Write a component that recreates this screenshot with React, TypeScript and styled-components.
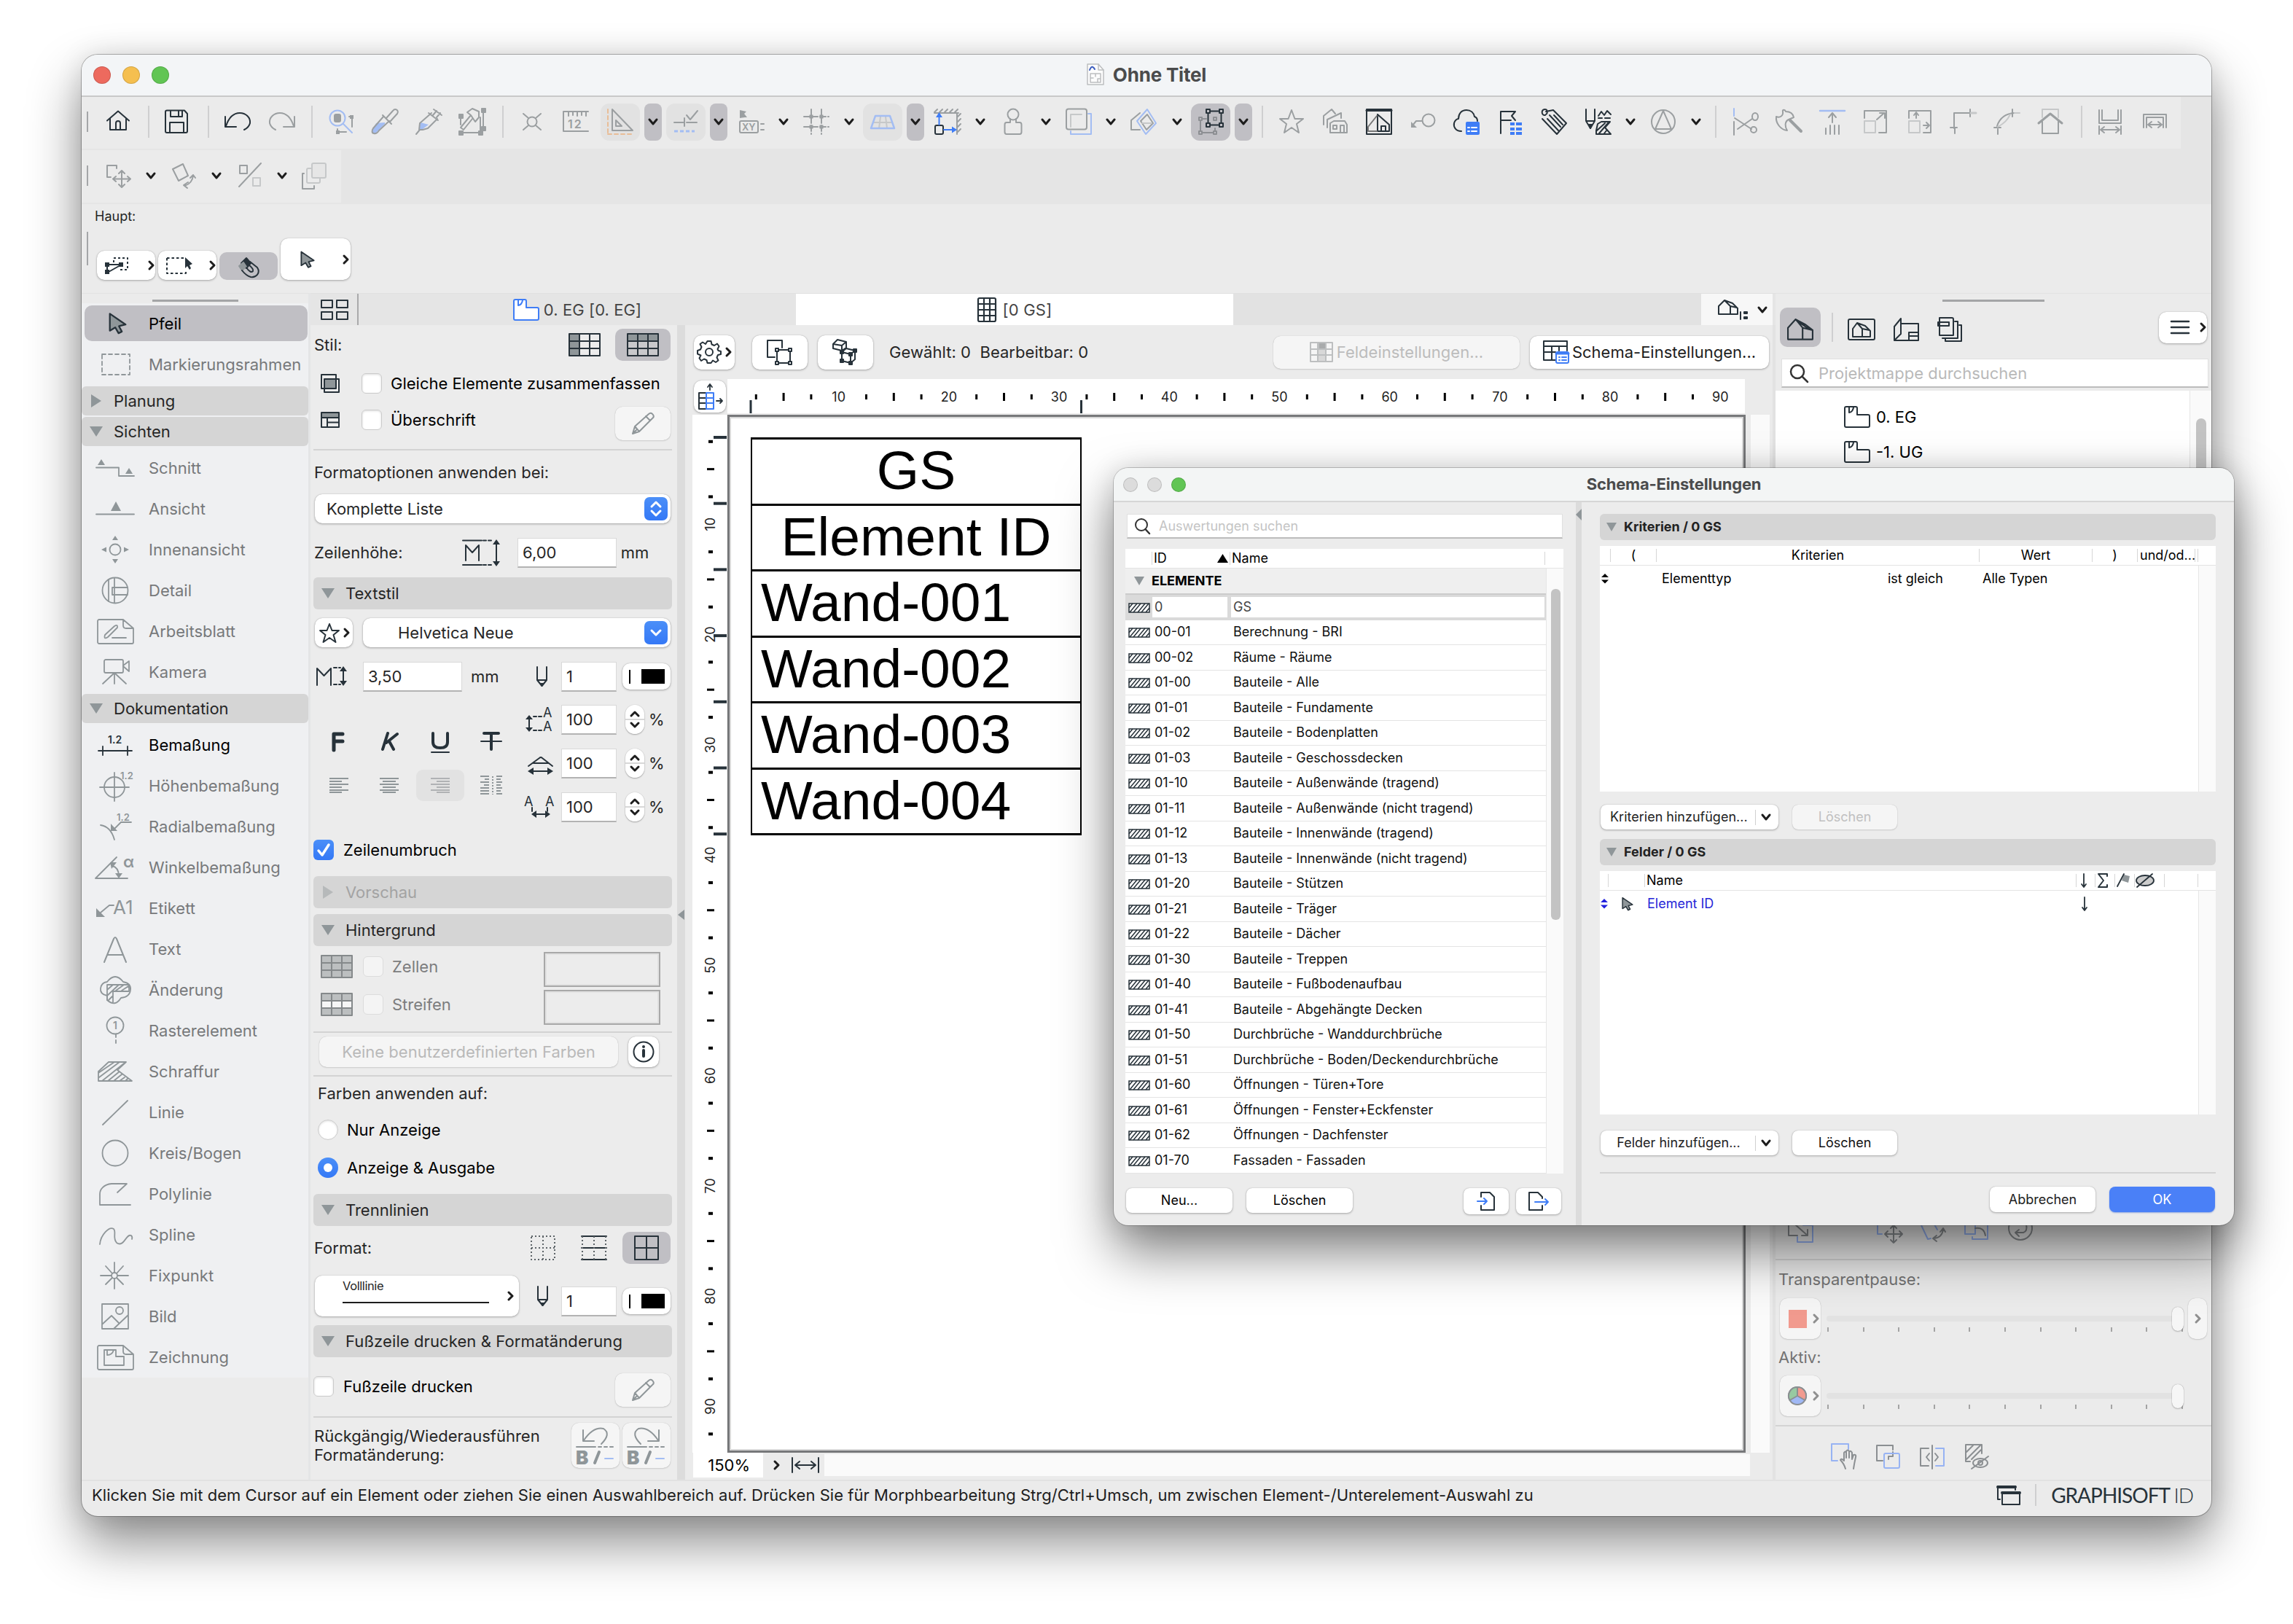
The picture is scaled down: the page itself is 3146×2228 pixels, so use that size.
import React from "react";
import styled, { createGlobalStyle, css } from "styled-components";

const DK = "#27323a";
const GR = "#9b9fa1";
const TG = "#8f9699";
const LG = "#c6c8c9";
const PB = "#a3bdf3";
const BB = "#3f7df6";
const OR = "#e9bd97";

const Global = createGlobalStyle`
  * { box-sizing: border-box; }
  html, body { margin: 0; padding: 0; background: #fff; }
  body { font-family: Inter, "Liberation Sans", sans-serif; font-size: 22px; color: #222; width: 3146px; height: 2228px; overflow: hidden; }
  svg { display: block; flex: none; overflow: visible; }
`;

/* ---------- shared parts ---------- */

const Txt = styled.span<{ $s?: number; $c?: string; $w?: number; $ls?: number; $ml?: number; $lh?: number }>`
  font-size: ${(p) => p.$s ?? 22}px;
  color: ${(p) => p.$c ?? "#262626"};
  font-weight: ${(p) => p.$w ?? 400};
  letter-spacing: ${(p) => p.$ls ?? 0}px;
  margin-left: ${(p) => p.$ml ?? 0}px;
  line-height: ${(p) => p.$lh ?? 28}px;
  white-space: pre;
  flex: none;
`;

const Desktop = styled.div`
  position: relative;
  width: 3146px;
  height: 2228px;
  padding: 75px 112px;
  background: #fff;
  overflow: hidden;
`;

const MainWindow = styled.main`
  width: 2922px;
  height: 2005px;
  border-radius: 22px;
  display: flex;
  flex-direction: column;
  background: #ebebeb;
  overflow: hidden;
  box-shadow: 0 0 0 1px rgba(0, 0, 0, 0.28), 0 36px 72px rgba(0, 0, 0, 0.46), 0 0 36px rgba(0, 0, 0, 0.1);
`;

const TitleBar = styled.header`
  height: 58px;
  flex: none;
  background: #f3f5f7;
  border-bottom: 2px solid #c9c9c9;
  display: grid;
  grid-template-columns: 1fr auto 1fr;
  align-items: center;
  padding: 0 16px;
`;

const Lights = styled.div<{ $gap: number }>`
  display: flex;
  gap: ${(p) => p.$gap}px;
`;

const Light = styled.i<{ $c: string; $d: number }>`
  width: ${(p) => p.$d}px;
  height: ${(p) => p.$d}px;
  border-radius: 50%;
  background: ${(p) => p.$c};
  box-shadow: inset 0 0 0 1px rgba(0, 0, 0, 0.14);
`;

const TitleText = styled.h1<{ $s: number }>`
  margin: 0 0 2px;
  display: flex;
  align-items: center;
  gap: 12px;
  font-size: ${(p) => p.$s}px;
  font-weight: 700;
  letter-spacing: -0.200px;
  color: #4a4b4c;
`;

const ToolStrip = styled.div<{ $h: number }>`
  height: ${(p) => p.$h}px;
  flex: none;
  display: flex;
  background: #e5e5e5;
`;

const Strip = styled.div<{ $w: number; $h: number }>`
  width: ${(p) => p.$w}px;
  height: ${(p) => p.$h}px;
  background: #ebebeb;
  display: flex;
  align-items: center;
  padding: 0 0 3px 7px;
`;

const Grip = styled.i<{ $h: number }>`
  width: 2px;
  height: ${(p) => p.$h}px;
  background: #a4a6a8;
  flex: none;
`;

const Slot = styled.div<{ $g: number; $w?: number }>`
  margin-left: ${(p) => p.$g}px;
  width: ${(p) => p.$w ?? 40}px;
  flex: none;
  display: flex;
  justify-content: center;
  align-items: center;
`;

const Sep = styled.i<{ $g: number; $h?: number }>`
  margin-left: ${(p) => p.$g}px;
  width: 2px;
  height: ${(p) => p.$h ?? 44}px;
  background: #cfcfd0;
  flex: none;
`;

const Toggle = styled.div<{ $g: number; $on?: boolean }>`
  margin-left: ${(p) => p.$g}px;
  width: 54px;
  height: 51px;
  border-radius: 12px;
  background: ${(p) => (p.$on ? "#c0bfc4" : "#e2e2e2")};
  display: flex;
  align-items: center;
  justify-content: center;
  flex: none;
`;

const Pill = styled.div`
  margin-left: 6px;
  width: 24px;
  height: 51px;
  border-radius: 8px;
  background: #c0bfc4;
  display: flex;
  align-items: center;
  justify-content: center;
  flex: none;
`;

const Push = styled.button<{ $w: number; $h: number; $g?: number; $mt?: number; $kind?: "off" | "on" | "primary"; $r?: number }>`
  appearance: none;
  border: 0;
  padding: 0;
  margin: ${(p) => p.$mt ?? 0}px 0 0 ${(p) => p.$g ?? 0}px;
  width: ${(p) => p.$w}px;
  height: ${(p) => p.$h}px;
  border-radius: ${(p) => p.$r ?? 10}px;
  display: flex;
  align-items: center;
  justify-content: center;
  flex: none;
  font: inherit;
  ${(p) =>
    p.$kind === "on"
      ? css`
          background: #c0bfc4;
        `
      : p.$kind === "primary"
        ? css`
            background: #4a80f7;
            box-shadow: 0 1px 2px rgba(30, 80, 200, 0.4);
          `
        : p.$kind === "off"
          ? css`
              background: #f5f5f5;
              box-shadow: 0 0 1px rgba(0, 0, 0, 0.25), 0 1px 2px rgba(0, 0, 0, 0.12);
            `
          : css`
              background: #fff;
              box-shadow: 0 0 1px rgba(0, 0, 0, 0.3), 0 1px 3px rgba(0, 0, 0, 0.28);
            `}
`;

type IcProps = { w?: number; h?: number; c?: string; sw?: number; children: React.ReactNode };
const Ic = ({ w = 40, h = 40, c = GR, sw = 2, children }: IcProps) => (
  <svg width={w} height={h} viewBox={`0 0 ${w} ${h}`} fill="none" stroke={c} strokeWidth={sw} strokeLinecap="round" strokeLinejoin="round">
    {children}
  </svg>
);

const Down = ({ c = "#1d1d1d" }: { c?: string }) => (
  <Ic w={14} h={10} c={c} sw={3}>
    <path d="M2 2l5 6 5-6" />
  </Ic>
);
const Right = ({ c = "#1d1d1d" }: { c?: string }) => (
  <Ic w={9} h={14} c={c} sw={3}>
    <path d="M2 2l5 5-5 5" />
  </Ic>
);
const Tri = ({ dir, c = "#8f9699" }: { dir: "down" | "right"; c?: string }) => (
  <svg width={18} height={14} viewBox="0 0 18 14" fill={c}>
    {dir === "down" && <path d="M0 0H18L9 14Z" />}
    {dir === "right" && <path d="M2 -2V16L16 7Z" />}
  </svg>
);

/* ---------- toolbar icons ---------- */

const icons: Record<string, React.ReactNode> = {
  home: <Ic c={DK}><path d="M5 18.500L20 5.500L35 18.500M9 15.500V31H31V15.500M17 31V22a3 3 0 0 1 6 0V31" /></Ic>,
  save: <Ic c={DK}><path d="M7 4.500H31L35 9V33a2 2 0 0 1-2 2H7a2 2 0 0 1-2-2V6.500a2 2 0 0 1 2-2ZM12 5V13H28V5M23 5V13M11 35V21H30V35" /></Ic>,
  undo: <Ic c={DK}><path d="M3 13V27H18M4 26C8 14 15 8 23 8C31 8 38 14 37 22C36 26 33 29 29 31" /></Ic>,
  redo: <Ic><path d="M37 13V27H22M36 26C32 14 25 8 17 8C9 8 2 14 3 22C4 26 7 29 11 31" /></Ic>,
  find: (
    <Ic>
      <circle cx="14" cy="15" r="10.500" stroke={PB} />
      <path d="M22 23L34 35" stroke={PB} />
      <rect x="10" y="10" width="8" height="10" rx="2" fill={GR} />
      <path d="M33 13H30M34 14V27M14 30V34H26" />
      <path d="M31 11h5v5h-5zM12 32h5v5h-5z" fill={GR} stroke="none" />
    </Ic>
  ),
  dropper: (
    <Ic>
      <path d="M8 22L3 31V36H7L20 23V21Z" fill={PB} stroke="none" />
      <path d="M18 13L4 29C2 32 2 36 5 36C8 37 10 35 12 32L26 19M17 11L29 23M22 15L31 5C34 1 40 4 37 9L27 20" />
    </Ic>
  ),
  syringe: (
    <Ic>
      <path d="M9 21L7 30H12L20 24Z" fill={PB} stroke="none" />
      <path d="M3 37L8 31M7 31L8 22L24 8M12 31L19 29L32 16M7 31H12M20 8L33 18M26 11L31 5M31 14L36 8M27 3L38 11" />
    </Ic>
  ),
  hammer: (
    <Ic>
      <path d="M2 10h5v5H2zM33 2h5v5h-5zM33 27h5v5h-5zM2 33h5v5H2zM29 33h5v5h-5z" fill={GR} />
      <path d="M4 15V24M7 35H29M35 7V27M31 33V14" />
      <path d="M13 7L20 2L29 6V14L24 20M18 11L4 28L8 31L20 16M13 7L18 11L24 20" />
    </Ic>
  ),
  xnode: <Ic><circle cx="20" cy="20" r="6.500" /><path d="M8 9L15 15M32 9L25 15M8 31L15 25M32 31L25 25" /></Ic>,
  ruler: (
    <Ic>
      <path d="M3 33H37M3 33V6H37M10 6V12M16 6V11M22 6V12M28 6V11M34 6V12" />
      <text x="9" y="29" fontSize="16" fill={GR} stroke="none" fontWeight="600" letterSpacing="2">12</text>
    </Ic>
  ),
  triangle: <Ic><path d="M9 3V32H37ZM14 18V26H22Z" /><path d="M3 3V36M3 37H38" stroke={OR} strokeDasharray="5 4" /></Ic>,
  check: <Ic><path d="M4 21H17M21 21H35M18 15V26M21 11L26 17L36 5" /><path d="M4 33H32" stroke={PB} strokeWidth="3" strokeDasharray="5 3" strokeLinecap="butt" /></Ic>,
  xy: (
    <Ic>
      <path d="M4 4L13 6L10 9L14 14H11L4 15Z" fill={GR} stroke="none" />
      <rect x="4" y="19" width="25" height="16" rx="2" />
      <text x="7" y="32" fontSize="13" fill={GR} stroke="none" fontWeight="600">XY</text>
      <path d="M33 23H37M33 31H37" />
    </Ic>
  ),
  grid: (
    <Ic>
      <path d="M13 3V37M27 3V37M3 13H37M3 27H37" strokeDasharray="8 3" />
      <path d="M10.500 10.500h5v5h-5zM24.500 10.500h5v5h-5zM10.500 24.500h5v5h-5zM24.500 24.500h5v5h-5z" fill={GR} stroke="none" />
    </Ic>
  ),
  persp: <Ic><path d="M17 13L15 29M24 13L26 29M7 21H33" stroke={LG} /><path d="M10 12H30L36 29H4Z" stroke={PB} strokeWidth="2.500" /></Ic>,
  guides: (
    <Ic>
      <path d="M2 8H35M33 8V37M2 7L6 3M9 7L13 3M16 7L20 3M23 7L27 3M30 7L34 3M34 13L38 9M34 20L38 16M34 27L38 23M34 34L38 30" />
      <rect x="3" y="25" width="11" height="12" rx="2" stroke={DK} />
      <path d="M8.500 24V13M15 31H28" stroke={BB} />
      <path d="M8.500 7L13 14H4ZM33 31L26 26.500V35.500Z" fill={BB} stroke="none" />
    </Ic>
  ),
  person: <Ic><circle cx="20" cy="10" r="7.500" fill="#ebebeb" /><path d="M16 16V21H11C9 21 8.500 22 8.500 24V34C8.500 36 9 37 11 37H29C31 37 31.500 36 31.500 34V24C31.500 22 31 21 29 21H24V16" /></Ic>,
  layers: <Ic><path d="M33 9H37V37H9V33" stroke={PB} /><path d="M9 27V10H24" stroke={LG} /><rect x="3" y="2.500" width="28" height="28" rx="3" /></Ic>,
  rhomb: <Ic><path d="M3 31V18L15 8M3 31H15" /><path d="M25 3L11 19L23 37L37 22Z" stroke={PB} /><path d="M25 10L16 19L24 31L33 22Z" /><path d="M18 22H31" stroke={LG} /></Ic>,
  group: (
    <Ic c={DK}>
      <g stroke="#8d8f93"><path d="M4 14h4v4H4zM4 33h4v4H4zM24 33h4v4h-4zM24 14h4v4h-4zM6 18V33M8 35H24M26 29V33M8 16H14" /></g>
      <path d="M14 3h5v5h-5zM32 3h5v5h-5zM14 22h5v5h-5zM32 22h5v5h-5zM19 5.500H32M19 24.500H32M16.500 8V22M34.500 8V22" />
    </Ic>
  ),
  star: <Ic><path d="M20 4L24.500 16H36L27 23L30 35L20 28L10 35L13 23L4 16H15.500Z" /></Ic>,
  houses: <Ic><path d="M4 24V12L15 3L20 9M9 28V17L28 8V15M13 35V22L18 19H33L36 24V35ZM17 25h5v5h-5zM27 35V25h5V35" /></Ic>,
  housebox: <Ic c={DK}><rect x="3" y="3" width="34" height="34" /><path d="M3 4.500H37" strokeWidth="3" /><path d="M18 10V33H34V24Z" /><path d="M17 12L5 27V33H17" stroke="#777" /><path d="M23 33V26H29V33" /></Ic>,
  key: <Ic><circle cx="27" cy="18" r="8.500" /><path d="M18 19H10L5 25" /><path d="M3 20V28H11Z" fill={GR} stroke="none" /></Ic>,
  cloud: (
    <Ic c={DK}>
      <path d="M13 33C5 33 2 27 3 22C4 18 7 16 9 16C9 9 13 4 20 4C26 4 30 8 31 13C34 14 35 17 35 19" />
      <rect x="19" y="20" width="19" height="18" rx="2" fill={BB} stroke="none" />
      <path d="M22 28H24M27 28H34M22 33H24M27 33H34" stroke="#fff" />
    </Ic>
  ),
  flag: (
    <Ic c={DK}>
      <path d="M6 36V6H26L21 12L26 18M6 18H20" />
      <path d="M19 21h6v4h-6zM19 28h6v4h-6zM19 34h6v4h-6zM27 21h8v4h-8zM27 28h8v4h-8zM27 34h8v4h-8z" fill={BB} stroke="none" />
    </Ic>
  ),
  tag: <Ic c={DK}><path d="M9 6L19 4L37 22L24 37L4 16M8 11C3 12 2 4 7 3C11 2 12 8 9 10M14 11L29 27M11 16L26 32M20 11L32 24" /></Ic>,
  pencil: (
    <Ic c={DK}>
      <path d="M4 3V19L10 29L16 19V3M4 19H16" /><path d="M8 24h4l-2 5z" fill={DK} />
      <path d="M21 12L25 6L29 11L33 5L38 10M21 15H26M30 15H37M20 23L25 20H37L30 28L38 37H18V32ZM19 32L30 22M22 36L34 22M29 36L33 31" />
    </Ic>
  ),
  tricircle: <Ic><circle cx="20" cy="20" r="16" /><path d="M20 5L9 30H31Z" /></Ic>,
  scissors: (
    <Ic><path d="M4 2V12" stroke={PB} /><path d="M4 20V38M5 15L28 30M9 30L29 16" /><ellipse cx="33" cy="13" rx="4" ry="5" /><ellipse cx="31" cy="31" rx="4" ry="4" /></Ic>
  ),
  axe: <Ic><path d="M12 6C11 3 15 3 16 6C22 6 26 9 27 14L20 17C14 20 15 27 18 32C9 31 2 22 3 13C8 15 13 12 12 6Z" /><path d="M22 18L37 33" strokeWidth="4" /></Ic>,
  uparrow: <Ic><path d="M3 5H37" stroke={PB} strokeWidth="2.500" /><path d="M20 9V21M15 14L20 8L25 14M11 29V37M17 25V37M23 25V37M29 25V37" /></Ic>,
  scale1: <Ic><path d="M5 15V5H35V35H25M22 17L32 8M26 8H33V15" /><path d="M5 19H20V35H5Z" stroke={LG} /></Ic>,
  scale2: <Ic><path d="M5 15V5H35V35H25M15 15V8M12 11L15 7L18 11M25 25H33M29 21L33 25L29 29" /><path d="M5 19H20V35H5Z" stroke={LG} /></Ic>,
  corner: <Ic><path d="M8 36V28M2 28H11" /><path d="M7 29V8H28M29 3V13" /><path d="M30 8H37" stroke={LG} strokeWidth="3" /></Ic>,
  curve: <Ic><path d="M7 37V30M2 28H11M6 26C9 16 17 9 30 8M27 3V13" /><path d="M7 27C16 22 20 18 24 10M30 8H37" stroke={LG} /></Ic>,
  roof: <Ic><path d="M9 14V3H31V14" stroke={LG} /><path d="M4 22L20 9L36 22" strokeWidth="3" /><path d="M9 19V36H31V19" /></Ic>,
  dim1: <Ic><path d="M5 4V22H35V4M9 4V18H31V4M5 26V37M35 26V37M7 31H33M12 27L7 31L12 35M28 27L33 31L28 35" /></Ic>,
  dim2: <Ic><path d="M5 28V10H36V28M9 28V14H32V28M11 24H30M16 20L11 24L16 28M25 20L30 24L25 28" /></Ic>,
  move: <Ic><path d="M17 10V6H4V22H9" /><path d="M24 13V36M12 24.500H36M20 17L24 13L28 17M20 32L24 36L28 32M16 21L12 24.500L16 28M32 21L36 24.500L32 28" /></Ic>,
  rotate: <Ic><path d="M5 11L19 4L26 20L13 27Z" /><path d="M21 34C28 32 32 28 33 20M29 23L33 19L36 23M26 29L20 33L25 37" /></Ic>,
  percent: <Ic><path d="M7 6H17V17H7ZM36 3L6 35" /><path d="M25 23H35V34H25Z" stroke={LG} /></Ic>,
  stack: <Ic><path d="M6 17H4V38H20V34" /><rect x="10" y="10" width="18" height="20" rx="2" stroke={LG} /><rect x="17" y="3" width="19" height="20" rx="2" stroke={LG} fill="#e6e6e6" /></Ic>,
};

type Tool = [kind: "i" | "b" | "B" | "p" | "c" | "s", gap: number, name?: string];
const tools1: Tool[] = [
  ["i", 21, "home"], ["s", 21], ["i", 17, "save"], ["s", 23], ["i", 19, "undo"], ["i", 21, "redo"], ["s", 20],
  ["i", 20, "find"], ["i", 19, "dropper"], ["i", 20, "syringe"], ["i", 20, "hammer"], ["s", 21], ["i", 19, "xnode"],
  ["i", 20, "ruler"], ["b", 14, "triangle"], ["p", 6], ["b", 6, "check"], ["p", 6], ["i", 13, "xy"], ["c", 12],
  ["i", 13, "grid"], ["c", 13], ["b", 7, "persp"], ["p", 6], ["i", 12, "guides"], ["c", 13], ["i", 13, "person"],
  ["c", 13], ["i", 13, "layers"], ["c", 12], ["i", 13, "rhomb"], ["c", 14], ["B", 7, "group"], ["p", 6], ["s", 13],
  ["i", 19, "star"], ["i", 20, "houses"], ["i", 20, "housebox"], ["i", 21, "key"], ["i", 19, "cloud"], ["i", 21, "flag"],
  ["i", 19, "tag"], ["i", 20, "pencil"], ["c", 13], ["i", 13, "tricircle"], ["c", 13], ["s", 14], ["i", 20, "scissors"],
  ["i", 19, "axe"], ["i", 20, "uparrow"], ["i", 19, "scale1"], ["i", 21, "scale2"], ["i", 20, "corner"], ["i", 20, "curve"],
  ["i", 19, "roof"], ["s", 22], ["i", 18, "dim1"], ["i", 21, "dim2"],
];
const tools2: Tool[] = [["i", 22, "move"], ["c", 12], ["i", 13, "rotate"], ["c", 13], ["i", 13, "percent"], ["c", 13], ["i", 12, "stack"]];

const Tools = ({ items }: { items: Tool[] }) => (
  <>
    {items.map(([k, g, n], i) =>
      k === "i" ? <Slot key={i} $g={g}>{icons[n!]}</Slot>
        : k === "s" ? <Sep key={i} $g={g} />
          : k === "c" ? <Slot key={i} $g={g} $w={24}><Down /></Slot>
            : k === "p" ? <Pill key={i}><Down /></Pill>
              : <Toggle key={i} $g={g} $on={k === "B"}>{icons[n!]}</Toggle>
    )}
  </>
);

/* ---------- main tool selector ---------- */

const HauptBar = styled.section`
  height: 122px;
  flex: none;
  padding: 5px 0 16px 8px;
  display: flex;
  flex-direction: column;
`;
const HauptRow = styled.div`
  display: flex;
  align-items: flex-end;
  margin-top: 18px;
  height: 57px;
`;
const HauptGrip = styled(Grip)`
  margin: 0 10px 20px -1px;
`;

const Arrow = ({ w, h }: { w: number; h: number }) => (
  <svg width={w} height={h} viewBox="0 0 22 26" fill={TG} stroke={DK} strokeWidth={2} strokeLinejoin="round">
    <path d="M1.500 1.500V22L8 18L12 25L16 23L12.500 16.500L20.500 14.500Z" />
  </svg>
);

const Haupt = () => (
  <HauptBar>
    <Txt $s={18} $ml={10} $lh={24}>Haupt:</Txt>
    <HauptRow>
      <HauptGrip $h={46} />
      <Push $w={80} $h={40} $g={2}>
        <Slot $g={8} $w={34}>
          <Ic w={34} h={26} c={DK}>
            <path d="M13 9V3H32V19H22" strokeDasharray="3 3" strokeLinecap="butt" />
            <path d="M4 12H22M4 12V23M6 22L22 13" />
            <path d="M1 9h6v6H1zM20 9h6v6h-6zM1 19h6v6H1z" fill={DK} stroke="none" />
          </Ic>
        </Slot>
        <Slot $g={26} $w={9}><Right /></Slot>
      </Push>
      <Push $w={80} $h={40} $g={4}>
        <Slot $g={8} $w={38}>
          <Ic w={38} h={28} c={DK}>
            <path d="M2 4H28M2 4V25H28V20" strokeDasharray="3.500 3" strokeLinecap="butt" />
            <path d="M27 3V18L30 15L33 20L35 18L33 14L37 12Z" fill={DK} stroke="none" />
          </Ic>
        </Slot>
        <Slot $g={22} $w={9}><Right /></Slot>
      </Push>
      <Push $w={80} $h={38} $g={4} $kind="on">
        <Ic w={34} h={34} c={DK}>
          <path d="M14 6L20 13L14 20L7 13Z" fill={DK} />
          <path d="M4 17L10 12L14 18L8 23Z" fill={TG} stroke={TG} />
          <path d="M19 11L29 19C34 27 27 33 20 32C16 31 12 28 8 23M14 19C18 25 21 26 23 24C24 22 22 19 17 15" />
        </Ic>
      </Push>
      <Push $w={96} $h={57} $g={4}>
        <Slot $g={24} $w={20}><Arrow w={20} h={28} /></Slot>
        <Slot $g={38} $w={9}><Right /></Slot>
      </Push>
    </HauptRow>
  </HauptBar>
);

/* ---------- tool box ---------- */

const Body = styled.div`
  height: 1628px;
  flex: none;
  display: grid;
  grid-template-columns: 314px 2010px 598px;
`;
const ToolBox = styled.nav`
  background: #ebebeb;
  border-right: 3px solid #e4e5e6;
  border-top: 1px solid #e2e2e2;
`;
const Handle = styled.div<{ $w: number; $h: number; $x: number }>`
  height: ${(p) => p.$h}px;
  padding: 8px 0 0 ${(p) => p.$x}px;
  flex: none;
  &::before {
    content: "";
    display: block;
    width: ${(p) => p.$w}px;
    height: 3px;
    background: #a4a5a7;
  }
`;
const ToolList = styled.div`
  background: #eff0f2;
  height: 1474px;
`;
const ToolRow = styled.div<{ $on?: boolean }>`
  height: 56px;
  padding: 3px 1px 4px 4px;
  & > div {
    height: 49px;
    border-radius: 10px;
    display: flex;
    align-items: center;
    padding-left: 14px;
    ${(p) => p.$on && "background: #c0bfc4;"}
  }
`;
const Group = styled.div`
  height: 40px;
  margin: 2px 0;
  background: #d5d5d5;
  border-radius: 6px;
  display: flex;
  align-items: center;
  padding-left: 11px;
`;

const ti = (children: React.ReactNode, c = TG) => <Ic w={56} h={44} c={c} sw={1.800}>{children}</Ic>;
const sm = (x: number, y: number, t: string, c = TG, s = 14) => (
  <text x={x} y={y} fontSize={s} fontWeight="600" fill={c} stroke="none">{t}</text>
);

const toolGroups: { head?: string; open?: boolean; rows: [string, React.ReactNode, string?][] }[] = [
  {
    rows: [
      ["Pfeil", <Slot $g={6} $w={50}><Arrow w={25} h={35} /></Slot>, "on"],
      ["Markierungsrahmen", ti(<path d="M10 8H48V36H10Z" strokeDasharray="5 4" />)],
    ],
  },
  { head: "Planung", rows: [] },
  {
    head: "Sichten",
    open: true,
    rows: [
      ["Schnitt", ti(<><path d="M2 21.500H33V33H54" /><path d="M4 18L9 10L14 18ZM42 30L47 22L52 30Z" fill={TG} stroke="none" /></>)],
      ["Ansicht", ti(<><path d="M2 29.500H54" /><path d="M22 25L29 12L36 25Z" fill={TG} stroke="none" /></>)],
      ["Innenansicht", ti(<><circle cx="28" cy="22" r="7.500" /><path d="M24 9L28 3L32 9ZM24 35L28 41L32 35ZM16 18.500L9 22L16 25.500ZM40 18.500L47 22L40 25.500Z" fill={TG} stroke="none" /></>)],
      ["Detail", ti(<><circle cx="28" cy="22" r="17.500" /><path d="M19 7V37M27 5V39M45 18H24V28H45" /></>)],
      ["Arbeitsblatt", ti(<><path d="M6 6H39L53 18V37a2 2 0 0 1-2 2H6a2 2 0 0 1-2-2V8a2 2 0 0 1 2-2ZM39 6V14Q39 18 43 18H53M14 27L27 15Q32 12 31 17L18 30Q12 34 14 27ZM24 31H43" /></>)],
      ["Kamera", ti(<><rect x="13" y="5" width="26" height="18" rx="2" /><path d="M39 13L47 7V21L39 14M27 23V38M26 24L11 38M28 24L43 38" /></>)],
    ],
  },
  {
    head: "Dokumentation",
    open: true,
    rows: [
      ["Bemaßung", ti(<><path d="M5 30H51M11 24V36M45 24V36" />{sm(18, 20, "1.2", DK)}</>, DK), "dark"],
      ["Höhenbemaßung", ti(<><circle cx="27" cy="24" r="14" /><path d="M7 24H47M27 4V43" />{sm(35, 13, "1.2", TG, 13)}</>)],
      ["Radialbemaßung", ti(<><path d="M8 20Q22 22 27 40M26 26L36 16H50" /><path d="M22 18V28H31Z" fill={TG} stroke="none" />{sm(30, 14, "1.2", TG, 13)}</>)],
      ["Winkelbemaßung", ti(<><path d="M30 8L1 37H45M24 20Q33 22 33 34" /><path d="M21 15H30L23 24ZM28 30H38L33 37Z" fill={TG} stroke="none" />{sm(39, 22, "α", TG, 22)}</>)],
      ["Etikett", ti(<><path d="M8 28L20 18H26" /><path d="M2 22V34H14Z" fill={TG} stroke="none" /><text x="25" y="30" fontSize="26" fill={TG} stroke="none">A1</text></>)],
      ["Text", ti(<path d="M13 40L26 8Q28 4 30 8L43 40M17 30H39" strokeWidth="2" />)],
      ["Änderung", ti(<><path d="M17 11Q28 -3 39 11Q50 13 49 22Q48 32 36 33Q28 46 17 36V30Q7 28 8 20Q9 12 17 11Z" /><path d="M17 15H47V24H25V39M17 15V36M17 22L25 15M17 30L33 15M19 36L25 30M29 23L40 15M37 23L46 17" /></>)],
      ["Rasterelement", ti(<><circle cx="28" cy="15" r="11.500" /><path d="M29 27V43" strokeDasharray="4 4" />{sm(25, 20, "1")}</>)],
      ["Schraffur", ti(<path d="M19 9H43L31 20L51 35H5V22ZM6 30L34 9M5 24L27 9M10 35L40 11M18 35L34 22M26 35L37 26M34 35L41 30M42 35L45 32" />)],
      ["Linie", ti(<path d="M11 39L45 6" />)],
      ["Kreis/Bogen", ti(<circle cx="28" cy="22" r="17.500" />)],
      ["Polylinie", ti(<path d="M31 20L44 8H23C12 9 7 16 7 22V37H49" />)],
      ["Spline", ti(<path d="M7 35C8 22 20 10 26 14C30 19 24 26 30 33C40 40 43 20 50 23Q52 25 51 28" />)],
      ["Fixpunkt", ti(<><circle cx="27" cy="22" r="4" /><path d="M27 4V18M27 26V40M8 22H23M31 22H46M15 9L24 19M39 9L30 19M15 34L24 25M39 34L30 25" /></>)],
      ["Bild", ti(<><path d="M10 5H46V39H10ZM10 33L23 21L33 31M26 39L46 20" /><circle cx="34" cy="14" r="5" /></>)],
      ["Zeichnung", ti(<><path d="M6 6H39L53 18V37a2 2 0 0 1-2 2H6a2 2 0 0 1-2-2V8a2 2 0 0 1 2-2ZM39 6V14Q39 18 43 18H53" /><path d="M14 12H29V21H40V33H13V12M17 12V19Q24 19 26 12" /></>)],
    ],
  },
];

const ToolPalette = () => (
  <ToolBox>
    <Handle $w={118} $h={13} $x={97} />
    <ToolList>
      {toolGroups.map((g, i) => (
        <React.Fragment key={i}>
          {g.head && (
            <Group>
              <Tri dir={g.open ? "down" : "right"} />
              <Txt $ml={15}>{g.head}</Txt>
            </Group>
          )}
          {g.rows.map(([t, ic, st]) => (
            <ToolRow key={t} $on={st === "on"}>
              <div>
                {ic}
                <Txt $ml={18} $c={st ? "#000" : "#77797b"}>{t}</Txt>
              </div>
            </ToolRow>
          ))}
        </React.Fragment>
      ))}
    </ToolList>
  </ToolBox>
);

/* ---------- settings palette ---------- */

const Center = styled.div`
  display: flex;
  flex-direction: column;
`;
const CenterBody = styled.div`
  flex: 1;
  display: grid;
  grid-template-columns: 503px 11px 1496px;
  min-height: 0;
`;
const Palette = styled.aside`
  background: #ececec;
  padding: 0 7px 0 4px;
  display: flex;
  flex-direction: column;
`;
const Row = styled.div<{ $h: number; $pt?: number; $pb?: number; $mt?: number }>`
  height: ${(p) => p.$h}px;
  flex: none;
  display: flex;
  align-items: center;
  padding: ${(p) => p.$pt ?? 0}px 2px ${(p) => p.$pb ?? 0}px 1px;
  margin-top: ${(p) => p.$mt ?? 0}px;
`;
const Fill = styled.span`
  flex: 1;
`;
const Rule = styled.hr<{ $mt?: number }>`
  border: 0;
  margin: ${(p) => p.$mt ?? 0}px 0 0;
  height: 2px;
  flex: none;
  width: 100%;
  background: #d3d3d3;
`;
const Head = styled.div<{ $mt?: number; $h?: number }>`
  height: ${(p) => p.$h ?? 44}px;
  margin-top: ${(p) => p.$mt ?? 0}px;
  flex: none;
  border-radius: 6px;
  background: #d5d5d5;
  display: flex;
  align-items: center;
  padding-left: 11px;
`;
const Check = styled.i<{ $g?: number; $on?: boolean; $off?: boolean; $round?: boolean }>`
  width: 28px;
  height: 28px;
  flex: none;
  margin-left: ${(p) => p.$g ?? 0}px;
  border-radius: ${(p) => (p.$round ? 14 : 6)}px;
  display: flex;
  align-items: center;
  justify-content: center;
  ${(p) =>
    p.$on
      ? "background: linear-gradient(#4b8ff8, #3478f6);"
      : p.$off
        ? "background: #f4f4f4; border: 1px solid #dcdcdc;"
        : "background: #fff; border: 1px solid #cbcbcb; box-shadow: inset 0 1px 3px rgba(0,0,0,.14);"}
`;
const Dot = styled.i`
  width: 12px;
  height: 12px;
  border-radius: 6px;
  background: #fff;
`;
const Select = styled.div<{ $g?: number; $pl: number; $w: number }>`
  margin-left: ${(p) => p.$g ?? 0}px;
  width: ${(p) => p.$w}px;
  height: 40px;
  border-radius: 10px;
  background: #fff;
  box-shadow: 0 0 1px rgba(0, 0, 0, 0.3), 0 1px 3px rgba(0, 0, 0, 0.3);
  display: flex;
  align-items: center;
  justify-content: space-between;
  padding: 0 4px 0 ${(p) => p.$pl}px;
`;
const Blue = styled.i`
  width: 32px;
  height: 32px;
  border-radius: 7px;
  background: linear-gradient(#4b8ff8, #3478f6);
  display: flex;
  align-items: center;
  justify-content: center;
`;
const Field = styled.div<{ $w: number; $g: number; $mt?: number }>`
  width: ${(p) => p.$w}px;
  height: 41px;
  margin: ${(p) => p.$mt ?? 0}px 0 0 ${(p) => p.$g}px;
  background: #fff;
  border: 1px solid #d9d9d9;
  border-bottom: 2px solid #b3b3b3;
  display: flex;
  align-items: center;
  padding-left: 6px;
  flex: none;
`;
const StyleGrid = styled.div`
  height: 180px;
  flex: none;
  display: grid;
  grid-template-columns: 290px 1fr;
`;
const LeftStyles = styled.div`
  padding: 30px 0 0 0;
  display: grid;
  grid-template-columns: 69px 70px 70px 70px;
  grid-auto-rows: 60px;
  place-items: center;
`;
const Metric = styled.div`
  height: 60px;
  display: flex;
  align-items: center;
`;
const Stepper = styled.div`
  margin-left: 12px;
  width: 26px;
  height: 40px;
  border-radius: 13px;
  background: linear-gradient(#fff 0 48%, #d8d8d8 48% 52%, #fff 52%);
  box-shadow: 0 0 1px rgba(0, 0, 0, 0.3), 0 1px 2px rgba(0, 0, 0, 0.3);
  display: flex;
  align-items: center;
  justify-content: center;
`;
const Swatch = styled.i`
  width: 32px;
  height: 20px;
  background: #000;
`;
const Bar = styled.i`
  width: 2px;
  height: 19px;
  background: #000;
`;
const EmptyBox = styled.i`
  width: 160px;
  height: 48px;
  margin: 8px 14px 0 0;
  border: 2px solid #a8a8a8;
  box-shadow: inset 0 0 0 2px #e2e2e2;
`;
const AlignBtn = styled.div<{ $on?: boolean }>`
  width: 66px;
  height: 43px;
  border-radius: 9px;
  display: flex;
  align-items: center;
  justify-content: center;
  ${(p) => p.$on && "background: #e2e2e2;"}
`;
const LineBtn = styled(Push)`
  justify-content: flex-start;
`;
const LineSample = styled.div`
  display: flex;
  flex-direction: column;
  gap: 11px;
  height: 50px;
  margin-left: 38px;
  width: 201px;
  text-align: left;
  &::after {
    content: "";
    height: 2px;
    background: #1d1d1d;
  }
`;

const TableIcon = ({ fills, c = DK, bg = "none" }: { fills: string; c?: string; bg?: string }) => (
  <Ic w={44} h={32} c={c}>
    <path d="M1 1H43V31H1Z" fill={bg} stroke="none" />
    <path d={fills} fill={c === DK ? TG : "#bcbfc0"} stroke="none" />
    <path d="M1 1H43V31H1ZM15 1V31M29 1V31M1 11H43M1 21H43" />
  </Ic>
);
const PencilIcon = () => (
  <Ic w={32} h={32} c={TG}>
    <path d="M2 30L5 20L24 3Q27 0 30 4Q32 7 29 9L11 27ZM5 20L11 27M20 6L26 12M7 25L2 30" />
  </Ic>
);
const PenIcon = () => (
  <Ic w={17} h={30} c={DK}>
    <path d="M2 2V20L8.500 28L15 20V2M3 20H14" />
    <path d="M6.500 25H10.500L8.500 28Z" fill={DK} />
  </Ic>
);
const PenBtn = ({ mt }: { mt?: number }) => (
  <Push $w={66} $h={36} $g={8} $mt={mt}>
    <Bar />
    <Slot $g={15} $w={32}><Swatch /></Slot>
  </Push>
);
const alignPaths = ["M1 2H27M1 6H18M1 10H27M1 14H18M1 18H27M1 21H18", "M1 2H27M5 6H23M1 10H27M5 14H23M1 18H27M5 21H23", "M1 2H27M9 6H27M1 10H27M9 14H27M1 18H27M9 21H27"];

const Settings = () => (
  <Palette>
    <Row $h={54}>
      <Txt>Stil:</Txt>
      <Fill />
      <TableIcon fills="M1 1H15V31H1Z" />
      <Push $w={76} $h={44} $g={20} $kind="on">
        <TableIcon fills="M1 1H43V11H1Z" bg="#c8c8cb" />
      </Push>
    </Row>
    <Row $h={52}>
      <Slot $g={9} $w={26}>
        <Ic w={26} h={26} c={DK}><path d="M5 7H22V20H5Z" fill={TG} stroke="none" /><path d="M1 1H21V20H1ZM5 7H25V25H5Z" /></Ic>
      </Slot>
      <Check $g={30} />
      <Txt $ml={12} $c="#000">Gleiche Elemente zusammenfassen</Txt>
    </Row>
    <Row $h={48}>
      <Slot $g={9} $w={26}>
        <Ic w={26} h={24} c={DK}><path d="M1 2H25V9H1Z" fill={TG} stroke="none" /><path d="M1 2H25V22H1ZM1 9H25M9 9V22M9 15.500H25" /></Ic>
      </Slot>
      <Check $g={30} />
      <Txt $ml={12} $c="#000">Überschrift</Txt>
      <Fill />
      <Push $w={76} $h={46} $mt={10} $kind="off"><PencilIcon /></Push>
    </Row>
    <Rule $mt={16} />
    <Row $h={60}><Txt>Formatoptionen anwenden bei:</Txt></Row>
    <Row $h={40}>
      <Select $g={1} $w={488} $pl={16}>
        <Txt>Komplette Liste</Txt>
        <Blue><Ic w={16} h={22} c="#fff" sw={3}><path d="M2 8L8 2L14 8M2 14L8 20L14 14" /></Ic></Blue>
      </Select>
    </Row>
    <Row $h={74} $pt={6}>
      <Txt>Zeilenhöhe:</Txt>
      <Fill />
      <Ic w={52} h={36} c={DK}>
        <path d="M1 1.500H27M1 35H27" /><path d="M29 1.500H42M29 35H42" strokeDasharray="4 3" />
        <path d="M5 29V8L14 18L23 8V29M47 4V33" />
        <path d="M42 7L47 0L52 7ZM42 30L47 37L52 30Z" fill={DK} stroke="none" />
      </Ic>
      <Field $w={136} $g={24}><Txt>6,00</Txt></Field>
      <Slot $g={4} $w={42}><Txt>mm</Txt></Slot>
      <Slot $g={0} $w={28} />
    </Row>
    <Head><Tri dir="down" /><Txt $ml={15}>Textstil</Txt></Head>
    <Row $h={40} $mt={12}>
      <Push $w={52} $h={40} $g={1}>
        <Ic w={30} h={28} c={DK}><path d="M15 2L18.500 11H28L20.500 17L23.500 27L15 21L6.500 27L9.500 17L2 11H11.500Z" /></Ic>
        <Slot $g={4} $w={9}><Right /></Slot>
      </Push>
      <Select $g={14} $w={422} $pl={48}>
        <Txt>Helvetica Neue</Txt>
        <Blue><Ic w={16} h={12} c="#fff" sw={3}><path d="M2 3L8 9L14 3" /></Ic></Blue>
      </Select>
    </Row>
    <Row $h={69} $pt={11}>
      <Slot $g={3} $w={42}>
        <Ic w={42} h={28} c={DK}>
          <path d="M1 26V3L10.500 13L20 3V26M37 4V23" /><path d="M24 2H33M24 25H33" strokeDasharray="4 3" />
          <path d="M32 7L37 0L42 7ZM32 20L37 27L42 20Z" fill={DK} stroke="none" />
        </Ic>
      </Slot>
      <Field $w={136} $g={22}><Txt>3,50</Txt></Field>
      <Txt $ml={12}>mm</Txt>
      <Fill />
      <PenIcon />
      <Field $w={76} $g={18}><Txt>1</Txt></Field>
      <PenBtn />
    </Row>
    <StyleGrid>
      <LeftStyles>
        <Ic w={28} h={32} c={DK} sw={5}><path d="M7 28V6H19M7 16H19" /></Ic>
        <Ic w={28} h={32} c={DK} sw={4}><path d="M5 27L12 5M25 6L10 18M14 16L20 27" /></Ic>
        <Ic w={28} h={32} c={DK} sw={4}><path d="M4 5V17Q4 25 14 25Q24 25 24 17V5" /><path d="M2 31H26" strokeWidth="2" /></Ic>
        <Ic w={30} h={32} c={DK} sw={4}><path d="M5 5H25M15 5V27" /><path d="M1 16H29" strokeWidth="2" /></Ic>
        {alignPaths.map((d, i) => (
          <AlignBtn key={i} $on={i === 2}>
            <Ic w={28} h={23} c={i === 2 ? "#b0b2b4" : TG}><path d={d} strokeLinecap="butt" /></Ic>
          </AlignBtn>
        ))}
        <Ic w={30} h={26} c={TG}>
          <path d="M0 1H12M6 5H12M0 9H12M5 13H12M0 17H12M0 21H12M0 25H12M22 1H30M22 5H28M22 9H30M22 13H28M22 17H30M22 21H28M22 25H30" strokeLinecap="butt" />
          <path d="M17 1V26" strokeDasharray="2 2" strokeLinecap="butt" />
        </Ic>
      </LeftStyles>
      <div>
        {[
          <><path d="M6 15V31" /><path d="M12 14H24M12 33H24" strokeDasharray="4 3" /><path d="M1 18L6 12L11 18ZM1 29L6 35L11 29Z" fill={DK} stroke="none" /><text x="25" y="15" fontSize="18" fill={DK} stroke="none">A</text><text x="25" y="34" fontSize="18" fill={DK} stroke="none">A</text></>,
          <><path d="M5 22L20 11Q22 9 24 11L38 22M12 18H32M10 29H34" /><path d="M12 24L4 29L12 34ZM31 24L39 29L31 34Z" fill={DK} stroke="none" /></>,
          <><path d="M14 28H30M10 19V24M31 19V24" /><path d="M16 23L9 28L16 33ZM28 23L35 28L28 33Z" fill={DK} stroke="none" /><text x="-1" y="17" fontSize="18" fill={DK} stroke="none">A</text><text x="28" y="17" fontSize="18" fill={DK} stroke="none">A</text></>,
        ].map((g, i) => (
          <Metric key={i}>
            <Ic w={40} h={36} c={DK}>{g}</Ic>
            <Field $w={76} $g={10}><Txt>100</Txt></Field>
            <Stepper><Ic w={16} h={28} c="#1d1d1d" sw={3}><path d="M3 9L8 4L13 9M3 19L8 24L13 19" /></Ic></Stepper>
            <Txt $ml={6}>%</Txt>
          </Metric>
        ))}
      </div>
    </StyleGrid>
    <Row $h={65} $pb={7}>
      <Check $g={-1} $on><Ic w={20} h={20} c="#fff" sw={3.500}><path d="M3 11L8 17L17 3" /></Ic></Check>
      <Txt $ml={13} $c="#000">Zeilenumbruch</Txt>
    </Row>
    <Head><Tri dir="right" c="#b6b9ba" /><Txt $ml={15} $c="#a3a3a3">Vorschau</Txt></Head>
    <Head $mt={8}><Tri dir="down" /><Txt $ml={15}>Hintergrund</Txt></Head>
    <Row $h={52} $mt={2}>
      <Slot $g={9} $w={44}><TableIcon fills="M1 1H43V31H1Z" c="#85898b" /></Slot>
      <Check $g={14} $off />
      <Txt $ml={12} $c="#7c7d7e">Zellen</Txt>
      <Fill />
      <EmptyBox />
    </Row>
    <Row $h={52}>
      <Slot $g={9} $w={44}><TableIcon fills="M1 1H43V11H1ZM1 21H43V31H1Z" c="#85898b" bg="#f6f6f6" /></Slot>
      <Check $g={14} $off />
      <Txt $ml={12} $c="#7c7d7e">Streifen</Txt>
      <Fill />
      <EmptyBox />
    </Row>
    <Rule $mt={11} />
    <Row $h={58} $pb={6}>
      <Push $w={410} $h={42} $g={7} $kind="off"><Txt $c="#b9b9b9">Keine benutzerdefinierten Farben</Txt></Push>
      <Push $w={42} $h={42} $g={14}>
        <Ic w={30} h={30} c={DK}><circle cx="15" cy="15" r="13.500" /><path d="M15 13V21" strokeWidth="4" /><circle cx="15" cy="8" r="1" strokeWidth="2" /></Ic>
      </Push>
    </Row>
    <Rule />
    <Row $h={46}><Txt $ml={5}>Farben anwenden auf:</Txt></Row>
    <Row $h={52} $mt={1}><Check $g={5} $round /><Txt $ml={12} $c="#000">Nur Anzeige</Txt></Row>
    <Row $h={52}><Check $g={5} $round $on><Dot /></Check><Txt $ml={12} $c="#000">Anzeige &amp; Ausgabe</Txt></Row>
    <Head $mt={10}><Tri dir="down" /><Txt $ml={15}>Trennlinien</Txt></Head>
    <Row $h={60}>
      <Txt>Format:</Txt>
      <Fill />
      <Ic w={34} h={34} c="#5d6468"><path d="M1 1H33V33H1ZM17 1V33M1 17H33" strokeDasharray="2 3" strokeLinecap="butt" /></Ic>
      <Slot $g={36} $w={34}>
        <Ic w={34} h={34} c={DK}><path d="M0 1H34M0 17H34M0 33H34" /><path d="M1 1V33M33 1V33M17 1V33" strokeDasharray="2 3" strokeLinecap="butt" stroke="#5d6468" /></Ic>
      </Slot>
      <Push $w={66} $h={44} $g={22} $kind="on"><Slot $g={0} $w={36}><Ic w={34} h={34} c={DK}><path d="M1 1H33V33H1ZM17 1V33M1 17H33" /></Ic></Slot></Push>
    </Row>
    <Row $h={72}>
      <LineBtn $w={280} $h={56} $g={1}>
        <LineSample><Txt $s={16.500} $ls={-0.400} $lh={22}>Volllinie</Txt></LineSample>
        <Slot $g={25} $w={9}><Right /></Slot>
      </LineBtn>
      <Fill />
      <Slot $g={0} $w={17}><PenIcon /></Slot>
      <Field $w={76} $g={17} $mt={14}><Txt>1</Txt></Field>
      <PenBtn mt={14} />
    </Row>
    <Head $mt={4}><Tri dir="down" /><Txt $ml={15} $ls={0.100}>Fußzeile drucken &amp; Formatänderung</Txt></Head>
    <Row $h={80}>
      <Check $g={-1} />
      <Txt $ml={13} $c="#000">Fußzeile drucken</Txt>
      <Fill />
      <Push $w={76} $h={46} $mt={10} $kind="off"><PencilIcon /></Push>
    </Row>
    <Rule $mt={1} />
    <Row $h={76}>
      <Txt $lh={26}>{"Rückgängig/Wiederausführen\nFormatänderung:"}</Txt>
      <Fill />
      {[false, true].map((m) => (
        <Push key={String(m)} $w={66} $h={62} $g={m ? 4 : 0} $kind="off">
          <Ic w={54} h={54} c={TG}>
            <g transform={m ? "translate(54 0) scale(-1 1)" : undefined}><path d="M10 6V21H25M11 20Q24 1 38 4Q49 11 35 25" /></g>
            <path d="M1 29H27" /><path d="M31 29H53" strokeDasharray="4 4" />
            <text x="0" y="53" fontSize="26" fontWeight="900" fill={TG} stroke="none">B</text>
            <path d="M26 51L32 36" strokeWidth="4" /><path d="M40 45H51" stroke={PB} />
          </Ic>
        </Push>
      ))}
    </Row>
  </Palette>
);

/* ---------- workspace ---------- */

const TabBar = styled.div`
  height: 44px;
  flex: none;
  display: flex;
  background: #e5e5e5;
  border-top: 1px solid #e0e0e0;
`;
const TabGrid = styled.div`
  width: 66px;
  border-right: 2px solid #a9aaab;
  display: flex;
  align-items: center;
  padding-left: 14px;
`;
const Tab = styled.div<{ $w: number; $c?: string; $gap?: number }>`
  width: ${(p) => p.$w}px;
  background: ${(p) => p.$c ?? "transparent"};
  display: flex;
  align-items: center;
  justify-content: center;
  gap: ${(p) => p.$gap ?? 6}px;
`;
const ViewTab = styled(Tab)`
  justify-content: flex-end;
  padding-right: 7px;
`;
const Collapse = styled.div`
  background: #dcdcdc;
  padding-top: 802px;
  overflow: hidden;
`;
const Work = styled.section`
  display: grid;
  grid-template-rows: 74px 49px 1421px 1fr;
  background: #ebebeb;
  border-right: 4px solid #e2e2e2;
`;
const InfoBar = styled.div`
  display: flex;
  align-items: center;
  padding-left: 12px;
`;
const RulerRow = styled.div`
  display: flex;
  padding-left: 12px;
`;
const HRulerBox = styled.div`
  margin-left: 2px;
  width: 1396px;
  height: 47px;
  background: #fff;
`;
const CanvasRow = styled.div`
  display: grid;
  grid-template-columns: 47px 1398px 26px;
  column-gap: 0;
  padding-left: 10px;
`;
const VRulerBox = styled.div`
  background: #fff;
`;
const Canvas = styled.div`
  margin-left: 1px;
  background: #fff;
  border: 3px solid #77787a;
  box-shadow: inset 0 0 0 2px #d9d9d9;
  padding: 28px 0 0 29px;
`;
const VScroll = styled.div`
  margin-left: 7px;
  width: 26px;
  height: 1424px;
  background: #fafafa;
`;
const Sheet = styled.div`
  width: 454px;
  border: 3px solid #000;
  border-width: 3px 2px;
  font-family: "Liberation Sans", Arial, sans-serif;
  font-size: 75px;
  line-height: 80px;
  color: #000;
`;
const SheetRow = styled.div<{ $mid?: boolean }>`
  height: 90.500px;
  display: flex;
  align-items: center;
  justify-content: ${(p) => (p.$mid ? "center" : "flex-start")};
  padding: 0 0 3px ${(p) => (p.$mid ? 0 : 12)}px;
  letter-spacing: 0;
  white-space: nowrap;
  &:first-child {
    height: 87.500px;
  }
  & + & {
    border-top: 3px solid #000;
  }
`;
const FootRow = styled.div`
  display: flex;
  align-items: center;
  padding: 0 0 0 11px;
`;
const ZoomBox = styled.div`
  width: 96px;
  height: 34px;
  background: #fff;
  display: flex;
  align-items: center;
  justify-content: flex-end;
  padding-right: 18px;
`;
const HScroll = styled.div`
  margin-left: 6px;
  width: 1270px;
  height: 30px;
  background: #fafafa;
`;

const range = (n: number) => Array.from({ length: n }, (_, i) => i);

const HRuler = () => (
  <svg width={1396} height={47} viewBox="0 0 1396 47">
    {range(36).map((i) => {
      const n = i + 1;
      const x = 1.500 + n * 37.800;
      if (n % 4 === 0)
        return <text key={i} x={x} y={31} fontSize={18} textAnchor="middle" fill="#222">{(n / 4) * 10}</text>;
      return n % 2 ? <rect key={i} x={x - 1.500} y={21} width={3} height={7} /> : <rect key={i} x={x - 1.500} y={19} width={3} height={11} />;
    })}
    <rect x={30.500} y={29} width={3} height={18} fill={DK} />
    <rect x={484} y={29} width={3} height={18} fill={DK} />
  </svg>
);
const VRuler = () => (
  <svg width={47} height={1421} viewBox="0 0 47 1421">
    {range(37).map((i) => {
      const n = i + 1;
      const y = -1 + n * 37.820;
      if (n % 4 === 0)
        return <text key={i} transform={`translate(31 ${y}) rotate(-90)`} fontSize={18} textAnchor="middle" fill="#222">{(n / 4) * 10}</text>;
      return n % 2 ? <rect key={i} x={22} y={y - 2} width={6} height={4} /> : <rect key={i} x={20} y={y - 1.500} width={10} height={3} />;
    })}
    {range(7).map((i) => <rect key={`g${i}`} x={29} y={29 + i * 90.700} width={18} height={4} fill={DK} />)}
  </svg>
);

const EgIcon = ({ c = BB, f = "#fff" }: { c?: string; f?: string }) => (
  <Ic w={36} h={30} c={c}>
    <path d="M3 1H16a2 2 0 0 1 2 2V12H33a2 2 0 0 1 2 2V27a2 2 0 0 1-2 2H3a2 2 0 0 1-2-2V3a2 2 0 0 1 2-2Z" fill={f} />
    <path d="M7 1V9Q12 8 13 2" />
  </Ic>
);
const GHouse = ({ w = 34 }: { w?: number }) => (
  <svg width={w} height={(w * 28) / 34} viewBox="0 0 34 28" fill="none" stroke={DK} strokeWidth={2} strokeLinejoin="round">
    <path d="M1 27V12L11 1L20 12V27ZM11 1L24 8L33 15V27H20M20 12L33 15M14 4L29 14" />
  </svg>
);

const Workspace = () => (
  <Work>
    <InfoBar>
      <Push $w={56} $h={47} $g={0}>
        <Ic w={34} h={34} c={DK}>
          <circle cx="17" cy="17" r="5" />
          <path d="M14.500 2H19.500L20.500 6.500L24 8L28 5.500L30.500 9L28.500 13L29.500 15L33 16V20L29 21L27.500 24.500L29.500 28.500L26 31L22 28.500L19.500 32H14.500L13.500 28L10 26.500L6 29L3.500 25.500L5.500 21.500L1 19.500V15L5 13.500L6.500 10L4.500 6L8 3.500L12 6Z" />
        </Ic>
        <Slot $g={5} $w={9}><Right /></Slot>
      </Push>
      <Push $w={76} $h={47} $g={24}>
        <Ic w={38} h={36} c={DK}><path d="M12 25H2V2H22V12M15 15H33V33H15Z" /><path d="M13 13h4v4h-4zM31 13h4v4h-4zM13 31h4v4h-4zM31 31h4v4h-4z" fill="#fff" /></Ic>
      </Push>
      <Push $w={76} $h={47} $g={14}>
        <Ic w={38} h={36} c={DK}><path d="M2 7L8 1L20 4V12L14 16L2 13ZM2 7L14 9L20 4M14 9V14M14 18L20 13L32 16V28L26 33L14 30ZM14 18L26 21L32 16M26 21V33" /><path d="M12 16h4v4h-4zM30 14h4v4h-4zM12 28h4v4h-4zM24 31h4v4h-4zM24 19h4v4h-4z" fill={DK} /></Ic>
      </Push>
      <Txt $ml={22} $ls={0.050}>Gewählt: 0  Bearbeitbar: 0</Txt>
      <Fill />
      <Push $w={338} $h={45} $kind="off">
        <Ic w={32} h={28} c="#bdbfc0"><path d="M12 1H22V10H12Z" fill="#a9abac" /><path d="M11 10H22V27H11Z" fill="#d8d8d8" stroke="none" /><path d="M1 1H31V27H1ZM11 1V27M22 1V27M1 10H31M1 18H31" /></Ic>
        <Txt $ml={5} $c="#bcbcbc">Feldeinstellungen...</Txt>
      </Push>
      <Push $w={328} $h={45} $g={14}>
        <Ic w={36} h={32} c={DK}><path d="M1 1H33V14M1 1V27H17M1 8H33M1 16H17M12 8V27M22 8V14" /><rect x="18" y="16" width="17" height="15" rx="2" stroke={BB} fill="#fff" /><path d="M18 18H35" stroke={BB} strokeWidth="3" /><path d="M22 23H23M26 23H32M22 27H23M26 27H32" stroke={BB} /></Ic>
        <Txt $ml={4} $c="#1d1d1d">Schema-Einstellungen...</Txt>
      </Push>
      <Slot $g={0} $w={5} />
    </InfoBar>
    <RulerRow>
      <Push $w={44} $h={44} $mt={2}>
        <Ic w={38} h={38} c={BB}>
          <path d="M4 14H14V36H4ZM4 21H14M4 28H14" stroke={DK} /><path d="M14 14H24V36H14ZM14 21H24M14 28H24" />
          <path d="M19 10V3M16 6L19 2L22 6M28 25H36M33 22L36 25L33 28" stroke={DK} strokeWidth="1.800" />
        </Ic>
      </Push>
      <HRulerBox><HRuler /></HRulerBox>
    </RulerRow>
    <CanvasRow>
      <VRulerBox><VRuler /></VRulerBox>
      <Canvas>
        <Sheet>
          <SheetRow $mid>GS</SheetRow>
          <SheetRow $mid>Element ID</SheetRow>
          <SheetRow>Wand-001</SheetRow>
          <SheetRow>Wand-002</SheetRow>
          <SheetRow>Wand-003</SheetRow>
          <SheetRow>Wand-004</SheetRow>
        </Sheet>
      </Canvas>
      <VScroll />
    </CanvasRow>
    <FootRow>
      <ZoomBox><Txt $c="#000">150%</Txt></ZoomBox>
      <Slot $g={12} $w={12}><Right /></Slot>
      <Slot $g={14} $w={40}><Ic w={40} h={24} c={DK}><path d="M2 2V22M38 2V22M6 12H34M12 7L6 12L12 17M28 7L34 12L28 17" /></Ic></Slot>
      <HScroll />
    </FootRow>
  </Work>
);

/* ---------- right navigator ---------- */

const Nav = styled.aside`
  display: flex;
  flex-direction: column;
  background: #ebebeb;
  border-top: 1px solid #e2e2e2;
`;
const NavTools = styled.div`
  height: 54px;
  display: flex;
  align-items: center;
  padding-left: 6px;
  margin-top: -1px;
`;
const NavTool = styled(Slot)`
  padding-top: 6px;
`;
const Search = styled.div<{ $w: number; $h: number; $m: string; $pl: number }>`
  width: ${(p) => p.$w}px;
  height: ${(p) => p.$h}px;
  margin: ${(p) => p.$m};
  padding-left: ${(p) => p.$pl}px;
  flex: none;
  background: #fff;
  border: 1px solid #e0e0e0;
  border-bottom: 2px solid #bcbcbc;
  display: flex;
  align-items: center;
`;
const Tree = styled.div`
  height: 1103px;
  margin-top: 4px;
  flex: none;
  background: #fff;
  display: grid;
  grid-template-columns: 1fr 30px;
`;
const TreeRow = styled.div`
  height: 48px;
  display: flex;
  align-items: center;
  padding-left: 94px;
`;
const TreeItems = styled.div`
  padding-top: 12px;
`;
const TreeScroll = styled.div`
  background: #fafafa;
  border-left: 1px solid #e6e6e6;
  padding: 38px 7px 0 8px;
  &::before {
    content: "";
    display: block;
    height: 300px;
    border-radius: 8px;
    background: #c3c3c3;
  }
`;
const NavIcons = styled.div<{ $h: number; $pt: number; $pl: number }>`
  height: ${(p) => p.$h}px;
  padding: ${(p) => p.$pt}px 0 0 ${(p) => p.$pl}px;
  display: flex;
  align-items: flex-start;
  flex: none;
`;
const NavLabel = styled.div<{ $h: number }>`
  height: ${(p) => p.$h}px;
  padding-left: 4px;
  display: flex;
  align-items: center;
`;
const SliderRow = styled.div`
  height: 56px;
  display: flex;
  padding-left: 6px;
  flex: none;
`;
const SliderBox = styled.div`
  position: relative;
  margin-left: 8px;
  width: 490px;
  padding-top: 24px;
`;
const Track = styled.div`
  height: 8px;
  border-radius: 4px;
  background: #e2e2e2;
`;
const Ticks = styled.div`
  display: flex;
  justify-content: space-between;
  margin: 8px 1px 0;
  & > i {
    width: 2px;
    height: 6px;
    background: #a4a4a4;
  }
`;
const Knob = styled.i`
  position: absolute;
  right: 0;
  top: 12px;
  width: 16px;
  height: 33px;
  border-radius: 8px;
  background: #f6f6f6;
  box-shadow: 0 0 1px rgba(0, 0, 0, 0.4), 0 1px 2px rgba(0, 0, 0, 0.2);
`;
const RedSquare = styled.i`
  width: 25px;
  height: 25px;
  background: #f19a8e;
`;

const Slider = () => (
  <SliderBox>
    <Track />
    <Ticks>{range(11).map((i) => <i key={i} />)}</Ticks>
    <Knob />
  </SliderBox>
);

const N6 = "#8b8f92";
const B6 = "#97b3f3";

const Navigator = () => (
  <Nav>
    <Handle $w={140} $h={20} $x={229} />
    <NavTools>
      <Push $w={56} $h={54} $kind="on"><NavTool $g={0} $w={36}><GHouse w={36} /></NavTool></Push>
      <Sep $g={15} $h={40} />
      <NavTool $g={21} $w={36}><Ic w={38} h={30} c={DK}><rect x="1" y="1" width="36" height="28" rx="2" /><path d="M7 25V14L13 6L20 14V25ZM13 6L24 10L31 17V25H20M20 14L30 16" /></Ic></NavTool>
      <NavTool $g={25} $w={36}><Ic w={36} h={32} c={DK}><path d="M11 31H2V12L11 1V22L2 31M11 8H35V31H11M22 31V20H35M22 25H35" /></Ic></NavTool>
      <NavTool $g={25} $w={34}><Ic w={34} h={34} c={DK}><path d="M3 1H20a2 2 0 0 1 2 2V25H3ZM1 7H16V12H1ZM24 6H28V29H7M30 11H33V33H11V30" /></Ic></NavTool>
      <Fill />
      <Push $w={66} $h={43} $g={0}>
        <Slot $g={14} $w={26}><Ic w={26} h={20} c={DK} sw={2.500}><path d="M1 2H25M1 10H25M1 18H25" /></Ic></Slot>
        <Slot $g={14} $w={9}><Right /></Slot>
      </Push>
      <Slot $g={0} $w={6} />
    </NavTools>
    <Search $w={586} $h={40} $m="16px 0 0 8px" $pl={9}>
      <Ic w={28} h={28} c="#333" sw={2.500}><circle cx="12" cy="12" r="9" /><path d="M18.500 18.500L26 26" /></Ic>
      <Txt $ml={13} $c="#b9b9b9">Projektmappe durchsuchen</Txt>
    </Search>
    <Tree>
      <TreeItems>
        {["0. EG", "-1. UG"].map((t) => (
          <TreeRow key={t}><EgIcon c={DK} f="none" /><Txt $ml={8} $c="#000">{t}</Txt></TreeRow>
        ))}
      </TreeItems>
      <TreeScroll />
    </Tree>
    <NavIcons $h={88} $pt={30} $pl={16}>
      <Ic w={36} h={36} c={N6}><path d="M14 26H2V2H20V10" /><path d="M22 12H35V35H14V28" stroke={B6} /><path d="M11 11L28 26M28 18V26H20" /></Ic>
      <Slot $g={86} $w={36}><Ic w={36} h={36} c={N6}><path d="M8 24H2V4H20V10" stroke={B6} /><path d="M24 12V36M12 24H36M20 16L24 12L28 16M20 32L24 36L28 32M16 20L12 24L16 28M32 20L36 24L32 28" /></Ic></Slot>
      <Slot $g={24} $w={36}><Ic w={36} h={36} c={N6}><path d="M2 12L16 4L24 18M2 12L11 31L15 30" stroke={B6} /><path d="M19 30Q31 29 32 17M28 21L32 16L35 21M23 26L18 30L23 34" /></Ic></Slot>
      <Slot $g={24} $w={36}><Ic w={36} h={36} c={N6}><path d="M2 24H16V6H2ZM12 28V31H33V12" stroke={B6} /><path d="M16 16Q28 14 30 26" /></Ic></Slot>
      <Slot $g={24} $w={36}><Ic w={36} h={36} c={N6}><circle cx="18" cy="16" r="16" /><path d="M12 22H22Q28 20 26 11M16 18L11 22L16 27" /></Ic></Slot>
    </NavIcons>
    <Rule />
    <NavLabel $h={52}><Txt $c="#737373">Transparentpause:</Txt></NavLabel>
    <SliderRow>
      <Push $w={56} $h={56} $kind="off"><Slot $g={10} $w={25}><RedSquare /></Slot><Slot $g={8} $w={9}><Right c="#8f8f8f" /></Slot></Push>
      <Slider />
      <Push $w={26} $h={56} $g={6} $kind="off"><Right c="#8f8f8f" /></Push>
    </SliderRow>
    <NavLabel $h={50}><Txt $c="#737373">Aktiv:</Txt></NavLabel>
    <SliderRow>
      <Push $w={56} $h={56} $kind="off">
        <Slot $g={9} $w={26}>
          <Ic w={26} h={26} c={N6}>
            <circle cx="13" cy="13" r="12" fill="#a0b8f5" />
            <path d="M13 13V1A12 12 0 0 0 2.600 19Z" fill="#97c9a1" /><path d="M13 13V1A12 12 0 0 1 23.400 19Z" fill="#f19a8e" />
          </Ic>
        </Slot>
        <Slot $g={8} $w={9}><Right c="#8f8f8f" /></Slot>
      </Push>
      <Slider />
    </SliderRow>
    <Rule $mt={12} />
    <NavIcons $h={72} $pt={23} $pl={76}>
      <Ic w={36} h={36} c={N6}><path d="M9 24H1V1H24V8" stroke={B6} /><path d="M20 35Q18 28 13 23Q14 20 18 24V13Q20 10 21 13V20V11Q23 8 25 11V20V12Q27 9 29 13V22L31 16Q35 15 34 19Q32 28 31 35" /></Ic>
      <Slot $g={25} $w={36}><Ic w={36} h={36} c={N6}><path d="M10 24H2V3H24V9M18 22V18H24V12" /><rect x="12" y="14" width="21" height="20" rx="2" stroke={B6} /></Ic></Slot>
      <Slot $g={24} $w={36}><Ic w={36} h={36} c={N6}><path d="M13 7H2V31H13M18 3V35M14 14L10 19L14 24M22 14L26 19L22 24" /><path d="M23 7H34V31H23" stroke={B6} /></Ic></Slot>
      <Slot $g={26} $w={36}><Ic w={36} h={36} c={N6}><path d="M8 25H2V2H24V14M3 12L12 3M3 22L22 3M10 22L23 9" /><ellipse cx="22" cy="27" rx="10" ry="6" /><circle cx="22" cy="27" r="3" /><path d="M10 35L33 18" /></Ic></Slot>
    </NavIcons>
  </Nav>
);

/* ---------- status bar ---------- */

const Status = styled.footer`
  height: 50px;
  flex: none;
  border-top: 2px solid #e2e2e2;
  display: flex;
  align-items: center;
  padding: 0 25px 10px 14px;
`;
const Brand = styled.span`
  font-family: Lato, sans-serif;
  font-size: 28px;
  letter-spacing: -1px;
  color: ${DK};
  margin-left: 20px;
  white-space: nowrap;
  & > span {
    font-weight: 300;
  }
`;

/* ---------- dialog ---------- */

const Dialog = styled.section`
  position: absolute;
  left: 1528px;
  top: 642px;
  width: 1537px;
  height: 1039px;
  border-radius: 20px;
  overflow: hidden;
  background: #ececec;
  display: flex;
  flex-direction: column;
  box-shadow: 0 0 0 1px rgba(0, 0, 0, 0.2), 0 36px 72px rgba(0, 0, 0, 0.5), 0 0 36px rgba(0, 0, 0, 0.12);
`;
const DialogTitle = styled.header`
  height: 47px;
  flex: none;
  background: #f3f5f5;
  border-bottom: 2px solid #d6d6d6;
  display: grid;
  grid-template-columns: 1fr auto 1fr;
  align-items: center;
  padding: 0 13px;
`;
const Panes = styled.div`
  flex: 1;
  display: grid;
  grid-template-columns: 634px 8px 895px;
`;
const LeftPane = styled.div`
  padding: 16px 0 0 16px;
`;
const Divider = styled.div`
  background: #dcdcdc;
  padding-top: 9px;
  overflow: hidden;
`;
const RightPane = styled.div`
  padding: 16px 0 0 25px;
  width: 870px;
`;
const List = styled.div`
  margin-top: 14px;
  width: 601px;
  height: 857px;
  background: #fff;
  display: grid;
  grid-template-rows: 27px 1fr;
  overflow: hidden;
`;
const Cols = styled.div<{ $t: string }>`
  display: grid;
  grid-template-columns: ${(p) => p.$t};
  align-items: center;
  height: 27px;
  background: #fff;
  border-bottom: 1px solid #e3e3e3;
`;
const Col = styled.div<{ $pl?: number; $mid?: boolean }>`
  height: 18px;
  border-left: 1px solid #d6d6d6;
  display: flex;
  align-items: center;
  justify-content: ${(p) => (p.$mid ? "center" : "flex-start")};
  padding-left: ${(p) => p.$pl ?? 0}px;
  white-space: nowrap;
`;
const ListBody = styled.div`
  display: grid;
  grid-template-columns: 577px 24px;
  min-height: 0;
`;
const ListScroll = styled.div<{ $thumb?: number }>`
  background: #fafafa;
  border-left: 1px solid #e6e6e6;
  padding: 28px 4px 0 6px;
  &::before {
    content: "";
    display: block;
    height: ${(p) => p.$thumb ?? 0}px;
    border-radius: 6px;
    background: #c3c3c3;
  }
`;
const GroupRow = styled.div`
  height: 36px;
  background: #efefef;
  border-bottom: 2px solid #cccccc;
  display: flex;
  align-items: center;
  padding-left: 12px;
`;
const Entry = styled.div<{ $on?: boolean }>`
  height: 34.500px;
  display: grid;
  grid-template-columns: 37px 103px 1fr;
  align-items: center;
  padding: 0 2px 0 0;
  background: ${(p) => (p.$on ? "#dadada" : "#fff")};
  border-bottom: ${(p) => (p.$on ? 0 : 1.500)}px solid #e4e4e4;
  & > svg {
    margin: 2px 0 0 4px;
  }
`;
const Cell = styled.span<{ $on?: boolean; $g?: number }>`
  height: 28px;
  display: flex;
  align-items: center;
  margin-left: ${(p) => p.$g ?? 0}px;
  padding-left: 3px;
  background: ${(p) => (p.$on ? "#fff" : "transparent")};
`;
const Foot = styled.div`
  margin-top: 20px;
  display: flex;
`;
const SectionHead = styled(Head)`
  padding-left: 9px;
`;
const GridPane = styled.div<{ $h: number }>`
  margin-top: 8px;
  width: 845px;
  height: ${(p) => p.$h}px;
  background: #fff;
  display: grid;
  grid-template-rows: 27px 1fr;
`;
const GridPaneBody = styled.div`
  display: grid;
  grid-template-columns: 821px 24px;
`;
const CritRow = styled.div<{ $t: string }>`
  display: grid;
  grid-template-columns: ${(p) => p.$t};
  align-items: center;
  height: 35px;
`;
const Combo = styled(Push)`
  justify-content: flex-start;
  padding-left: 13px;
  & > i {
    width: 1px;
    height: 21px;
    background: #d0d0d0;
    margin-left: auto;
  }
  & > svg {
    margin: 0 10px 0 7px;
  }
`;
const ButtonRow = styled.div<{ $mt: number; $end?: boolean }>`
  display: flex;
  width: 845px;
  align-items: center;
  justify-content: ${(p) => (p.$end ? "flex-end" : "flex-start")};
  margin-top: ${(p) => p.$mt}px;
`;

const entries: [string, string][] = [
  ["0", "GS"], ["00-01", "Berechnung - BRI"], ["00-02", "Räume - Räume"], ["01-00", "Bauteile - Alle"],
  ["01-01", "Bauteile - Fundamente"], ["01-02", "Bauteile - Bodenplatten"], ["01-03", "Bauteile - Geschossdecken"],
  ["01-10", "Bauteile - Außenwände (tragend)"], ["01-11", "Bauteile - Außenwände (nicht tragend)"],
  ["01-12", "Bauteile - Innenwände (tragend)"], ["01-13", "Bauteile - Innenwände (nicht tragend)"],
  ["01-20", "Bauteile - Stützen"], ["01-21", "Bauteile - Träger"], ["01-22", "Bauteile - Dächer"],
  ["01-30", "Bauteile - Treppen"], ["01-40", "Bauteile - Fußbodenaufbau"], ["01-41", "Bauteile - Abgehängte Decken"],
  ["01-50", "Durchbrüche - Wanddurchbrüche"], ["01-51", "Durchbrüche - Boden/Deckendurchbrüche"],
  ["01-60", "Öffnungen - Türen+Tore"], ["01-61", "Öffnungen - Fenster+Eckfenster"], ["01-62", "Öffnungen - Dachfenster"],
  ["01-70", "Fassaden - Fassaden"],
];

const Hatch = () => (
  <svg width={30} height={14} viewBox="0 0 30 14" fill="#fff" stroke={DK} strokeWidth={1.500}>
    <path d="M1 1H29V13H1Z" />
    <path d="M1 7L6 1M2 13L12 1M7 13L17 1M13 13L23 1M18 13L28 1M24 13L29 7" />
  </svg>
);
const UpDown = ({ c }: { c: string }) => (
  <svg width={10} height={14} viewBox="0 0 10 14" fill={c}><path d="M0 5L5 0L10 5ZM0 8.500L5 13.500L10 8.500Z" /></svg>
);
const DownArrow = () => <Ic w={12} h={20} c={DK} sw={1.800}><path d="M6 1V18M3 15L6 19L9 15" /></Ic>;

const S = ({ children, c = "#000", w, ml }: { children: React.ReactNode; c?: string; w?: number; ml?: number }) => (
  <Txt $s={18} $c={c} $w={w} $ml={ml} $lh={22}>{children}</Txt>
);

const SchemaDialog = () => (
  <Dialog>
    <DialogTitle>
      <Lights $gap={13}>
        <Light $c="#dcdcdc" $d={20} /><Light $c="#dcdcdc" $d={20} /><Light $c="#61c554" $d={20} />
      </Lights>
      <TitleText $s={22}>Schema-Einstellungen</TitleText>
    </DialogTitle>
    <Panes>
      <LeftPane>
        <Search $w={598} $h={34} $m="0 0 0 2px" $pl={9}>
          <Ic w={22} h={24} c="#333"><circle cx="10" cy="10" r="8" /><path d="M15.500 16L21 22" strokeWidth="2.500" /></Ic>
          <S c="#c4c4c4" ml={12}>Auswertungen suchen</S>
        </Search>
        <List>
          <Cols $t="36px 107px 432px 1fr">
            <span />
            <Col $pl={2}>
              <S>ID</S>
              <Slot $g={69} $w={16}><svg width={15} height={12} viewBox="0 0 15 12"><path d="M0 12L7.500 0L15 12Z" /></svg></Slot>
            </Col>
            <Col $pl={2}><S>Name</S></Col>
            <Col />
          </Cols>
          <ListBody>
            <div>
              <GroupRow>
                <svg width={14} height={12} viewBox="0 0 14 12" fill={TG}><path d="M0 0H14L7 12Z" /></svg>
                <S w={700} ml={10}>ELEMENTE</S>
              </GroupRow>
              {entries.map(([id, name], i) => (
                <Entry key={id} $on={i === 0}>
                  <Hatch />
                  <Cell $on={i === 0}><S c={i ? "#111" : "#444"}>{id}</S></Cell>
                  <Cell $on={i === 0} $g={5}><S c={i ? "#111" : "#444"}>{name}</S></Cell>
                </Entry>
              ))}
            </div>
            <ListScroll $thumb={454} />
          </ListBody>
        </List>
        <Foot>
          <Push $w={146} $h={34} $g={1} $r={8}><S>Neu...</S></Push>
          <Push $w={146} $h={34} $g={19} $r={8}><S>Löschen</S></Push>
          <Push $w={62} $h={36} $g={152} $r={8}>
            <Ic w={26} h={28} c={DK}><path d="M6 8V2H18L24 8V26H6V20" /><path d="M1 14H14M10 10L14 14L10 18" stroke={BB} /></Ic>
          </Push>
          <Push $w={62} $h={36} $g={10} $r={8}>
            <Ic w={30} h={28} c={DK}><path d="M20 20V26H2V2H14L20 8V10" /><path d="M10 15H28M24 11L28 15L24 19" stroke={BB} /></Ic>
          </Push>
        </Foot>
      </LeftPane>
      <Divider><svg width={8} height={16} viewBox="0 0 8 16" fill={TG}><path d="M8 0V16L0 8Z" /></svg></Divider>
      <RightPane>
        <SectionHead $h={36}>
          <svg width={14} height={12} viewBox="0 0 14 12" fill={TG}><path d="M0 0H14L7 12Z" /></svg>
          <S w={700} ml={10} c="#222">Kriterien / 0 GS</S>
        </SectionHead>
        <GridPane $h={337}>
          <Cols $t="14px 63px 443px 155px 62px 79px 4px 1fr">
            <span />
            <Col $mid><S>(</S></Col>
            <Col $mid><S>Kriterien</S></Col>
            <Col $mid><S>Wert</S></Col>
            <Col $mid><S>)</S></Col>
            <Col $pl={3}><S>und/od...</S></Col>
            <Col />
            <Col />
          </Cols>
          <GridPaneBody>
            <CritRow $t="85px 310px 130px 1fr">
              <Slot $g={2} $w={10}><UpDown c="#000" /></Slot>
              <S>Elementtyp</S>
              <S>ist gleich</S>
              <S>Alle Typen</S>
            </CritRow>
            <ListScroll />
          </GridPaneBody>
        </GridPane>
        <ButtonRow $mt={18}>
          <Combo $w={244} $h={34} $g={1} $r={8}><S c="#222">Kriterien hinzufügen...</S><i /><Down /></Combo>
          <Push $w={144} $h={34} $g={19} $r={8} $kind="off"><S c="#c0c0c0">Löschen</S></Push>
        </ButtonRow>
        <SectionHead $h={36} $mt={13}>
          <svg width={14} height={12} viewBox="0 0 14 12" fill={TG}><path d="M0 0H14L7 12Z" /></svg>
          <S w={700} ml={10} c="#222">Felder / 0 GS</S>
        </SectionHead>
        <GridPane $h={334}>
          <Cols $t="11px 50px 592px 26px 27px 27px 41px 46px 1fr">
            <span />
            <Col />
            <Col $pl={2}><S>Name</S></Col>
            <Col $pl={4}><DownArrow /></Col>
            <Col $pl={2}><Ic w={16} h={20} c={DK}><path d="M14 4V1H2L9 10L2 19H14V16" /></Ic></Col>
            <Col $pl={1}><Ic w={20} h={20} c={DK} sw={1.800}><path d="M11 2L19 4L17 13L8 10Z" fill={TG} stroke="none" /><path d="M11 1L2 18" /></Ic></Col>
            <Col><Ic w={28} h={20} c={DK} sw={1.800}><ellipse cx="14" cy="10" rx="12" ry="7" fill="#ccc" /><path d="M3 19L24 1" /></Ic></Col>
            <Col />
            <Col />
          </Cols>
          <GridPaneBody>
            <CritRow $t="30px 35px 594px 1fr">
              <Slot $g={1} $w={10}><UpDown c="#2222dd" /></Slot>
              <Arrow w={16} h={26} />
              <S c="#2626d8">Element ID</S>
              <DownArrow />
            </CritRow>
            <ListScroll />
          </GridPaneBody>
        </GridPane>
        <ButtonRow $mt={22}>
          <Combo $w={244} $h={34} $g={1} $r={8}><Slot $g={10} $w={168}><S c="#222">Felder hinzufügen...</S></Slot><i /><Down /></Combo>
          <Push $w={144} $h={34} $g={19} $r={8}><S c="#111">Löschen</S></Push>
        </ButtonRow>
        <Rule $mt={23} />
        <ButtonRow $mt={18} $end>
          <Push $w={145} $h={35} $r={8}><S c="#222">Abbrechen</S></Push>
          <Push $w={145} $h={35} $g={19} $r={8} $kind="primary"><S c="#fff">OK</S></Push>
          <Slot $g={0} $w={1} />
        </ButtonRow>
      </RightPane>
    </Panes>
  </Dialog>
);

export default function App() {
  return (
    <>
      <Global />
      <Desktop>
        <MainWindow>
          <TitleBar>
            <Lights $gap={16}>
              <Light $c="#ed6a5e" $d={24} /><Light $c="#f5bf4f" $d={24} /><Light $c="#61c554" $d={24} />
            </Lights>
            <TitleText $s={26}>
              <Ic w={24} h={30} c="#bcbec0" sw={1.500}>
                <path d="M1 1H16L23 9V29H1Z" fill="#fcfcfc" /><path d="M16 1V9H23M5 14H19V26H5ZM12 14V18M5 20H9M15 26V21H19" />
                <path d="M4 9Q7 1 11 8" stroke="#3d5fc0" strokeWidth="2" />
              </Ic>
              Ohne Titel
            </TitleText>
          </TitleBar>
          <ToolStrip $h={73}><Strip $w={2880} $h={71}><Grip $h={28} /><Tools items={tools1} /></Strip></ToolStrip>
          <ToolStrip $h={74}><Strip $w={356} $h={72}><Grip $h={28} /><Tools items={tools2} /></Strip></ToolStrip>
          <Haupt />
          <Body>
            <ToolPalette />
            <Center>
              <TabBar>
                <TabGrid>
                  <Ic w={38} h={28} c={DK}><path d="M1 1H16V11H1ZM22 1H37V11H22ZM1 17H16V27H1ZM22 17H37V27H22Z" /></Ic>
                </TabGrid>
                <Tab $w={600}><EgIcon /><Txt $c="#444" $ls={0.100}>0. EG [0. EG]</Txt></Tab>
                <Tab $w={600} $c="#fff" $gap={9}>
                  <Ic w={26} h={34} c={DK} sw={2.200}><rect x="1" y="1" width="24" height="32" rx="2" /><path d="M9 1V33M17 1V33M1 9H25M1 17H25M1 25H25" /></Ic>
                  <Txt $c="#444" $ls={0.200}>[0 GS]</Txt>
                </Tab>
                <Tab $w={642} $c="#e2e2e2" />
                <ViewTab $w={98} $c="#f7f7f7" $gap={10}>
                  <Ic w={44} h={28} c={DK}>
                    <path d="M1 20V9L9 1L17 9V20ZM9 1L20 5L27 12V20H17M17 9L26 11" /><path d="M31 17V27" />
                    <path d="M36 17h4v2h-4zM36 24h4v2h-4z" fill={DK} />
                  </Ic>
                  <Down />
                </ViewTab>
              </TabBar>
              <CenterBody>
                <Settings />
                <Collapse><svg width={10} height={14} viewBox="0 0 10 14" fill={TG}><path d="M10 0V14L1 7Z" /></svg></Collapse>
                <Workspace />
              </CenterBody>
            </Center>
            <Navigator />
          </Body>
          <Status>
            <Txt $c="#1d1d1d" $ls={0.040}>Klicken Sie mit dem Cursor auf ein Element oder ziehen Sie einen Auswahlbereich auf. Drücken Sie für Morphbearbeitung Strg/Ctrl+Umsch, um zwischen Element-/Unterelement-Auswahl zu</Txt>
            <Fill />
            <Ic w={32} h={28} c={DK}><path d="M4 20H1V2H25V7M7 10H31V27H7Z" /><path d="M1 3H25M7 11H31" strokeWidth="4" /></Ic>
            <Sep $g={20} $h={30} />
            <Brand>GRAPHISOFT <span>ID</span></Brand>
          </Status>
        </MainWindow>
        <SchemaDialog />
      </Desktop>
    </>
  );
}
